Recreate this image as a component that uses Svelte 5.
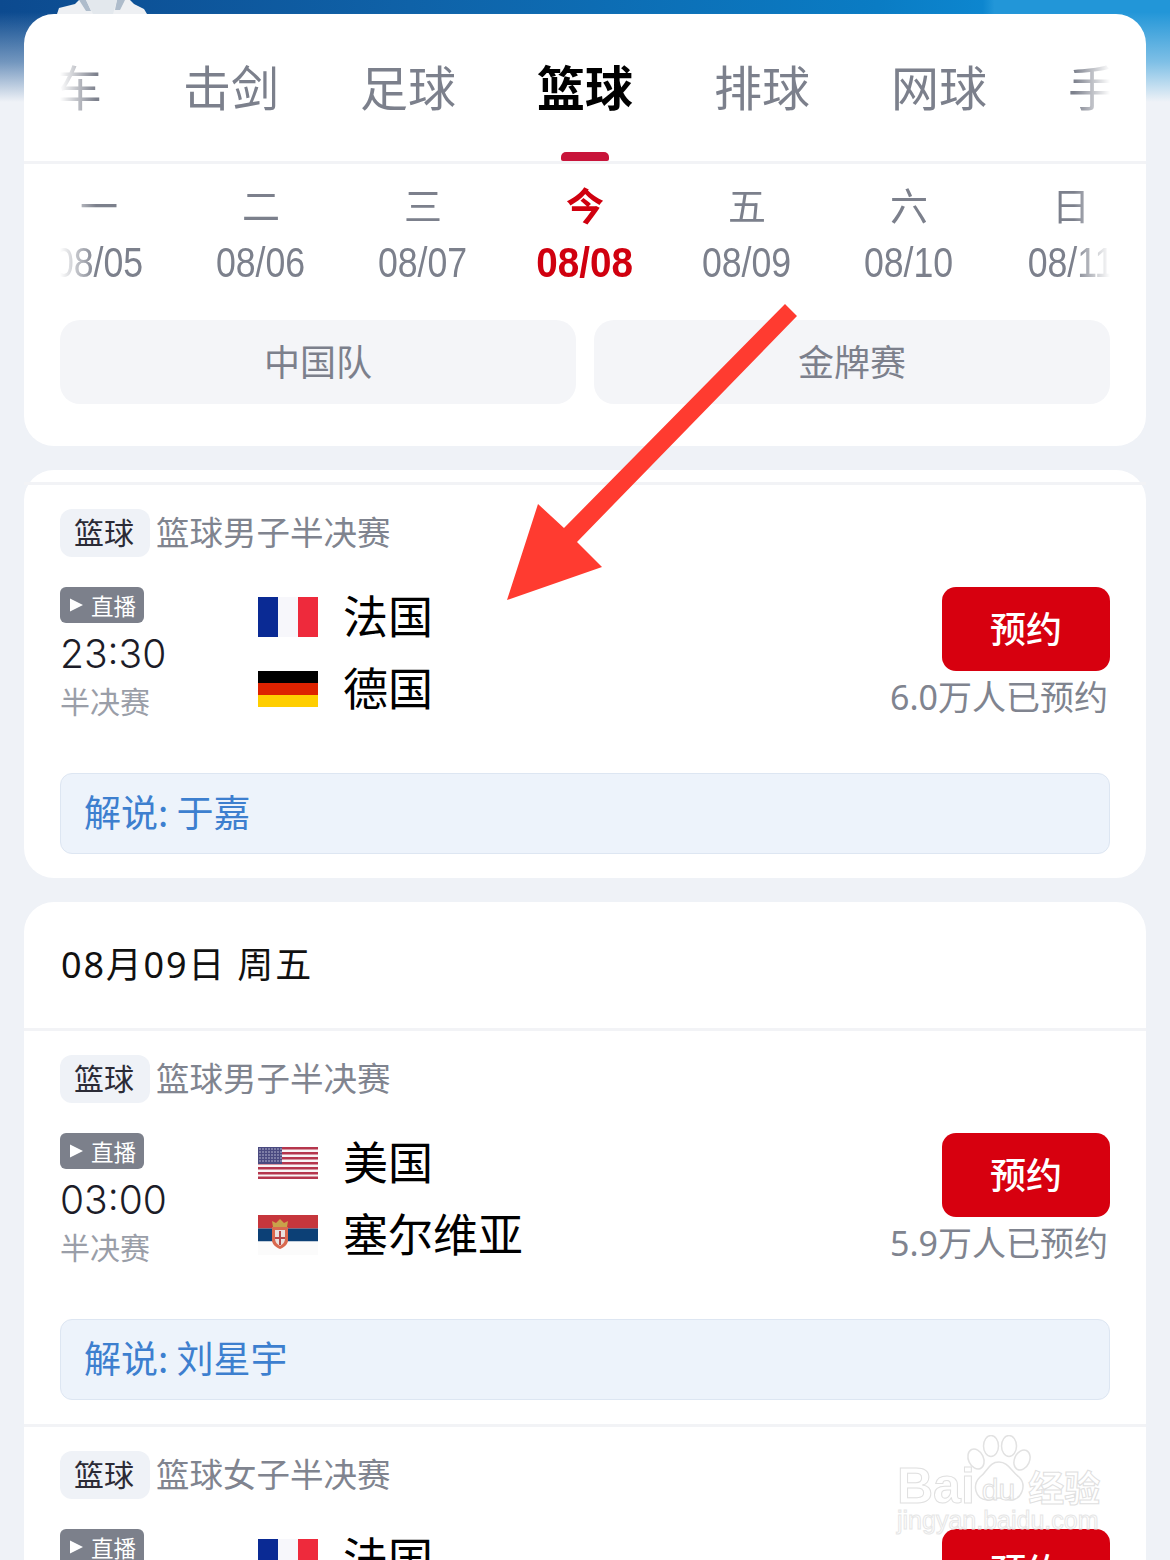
<script>
  const tabs = ['单车', '击剑', '足球', '篮球', '排球', '网球', '手球'];
  const days = [
    ['一', '08/05'], ['二', '08/06'], ['三', '08/07'], ['今', '08/08'],
    ['五', '08/09'], ['六', '08/10'], ['日', '08/11']
  ];
</script>

{#snippet flag(code)}
  {#if code === 'fr'}
    <svg class="flag" width="60" height="40" viewBox="0 0 60 40"><rect width="20" height="40" fill="#0a2a94"/><rect x="20" width="20" height="40" fill="#f7f7fb"/><rect x="40" width="20" height="40" fill="#ee2a3c"/></svg>
  {:else if code === 'de'}
    <svg class="flag" width="60" height="36" viewBox="0 0 60 36"><rect width="60" height="12" fill="#000"/><rect y="12" width="60" height="12" fill="#dd2200"/><rect y="24" width="60" height="12" fill="#ffce00"/></svg>
  {:else if code === 'us'}
    <svg class="flag" width="60" height="32" viewBox="0 0 60 32">
      <rect width="60" height="32" fill="#f8f4f5"/>
      {#each [0, 5, 10, 15, 20, 25, 29.5] as y}<rect y={y} width="60" height="2.5" fill="#b5364d"/>{/each}
      <rect width="24" height="17" fill="#4a4a80"/>
      {#each [2, 5, 8, 11, 14] as y}{#each [2, 5, 8, 11, 14, 17, 20, 23] as x}<rect x={x - 0.6} y={y - 0.6} width="1.2" height="1.2" fill="#d8d8e8"/>{/each}{/each}
    </svg>
  {:else}
    <svg class="flag" width="60" height="40" viewBox="0 0 60 40">
      <rect width="60" height="13.500" fill="#c6363c"/><rect y="13.500" width="60" height="13" fill="#0c4076"/><rect y="26.500" width="60" height="13.500" fill="#fbfbfb"/>
      <path d="M15 12 14 6l4 2 4-4 4 4 4-2-1 6z" fill="#c9a24a"/>
      <path d="M14 12h16v13c0 4-3 7-8 9-5-2-8-5-8-9z" fill="#d9694f"/>
      <path d="M17 15h10v9c0 3-2 5-5 7-3-2-5-4-5-7z" fill="#e9e2e0"/>
      <path d="M21 16h2v6h4v2h-4v6h-2v-6h-4v-2h4z" fill="#b5484a"/>
    </svg>
  {/if}
{/snippet}

{#snippet match(kind, title, time, teams, count, caster)}
  <section class="match">
    <div class="heading">
      <span class="tag">{kind}</span>
      <span class="title">{title}</span>
    </div>
    <div class="main">
      <div class="when">
        <span class="live">
          <svg width="13" height="14" viewBox="0 0 13 14"><path d="M0 .5v13l13-6.500z" fill="#fff"/></svg>
          直播
        </span>
        <span class="time">{time}</span>
        <span class="stage">半决赛</span>
      </div>
      <div class="teams">
        {#each teams as t}
          <div class="team">
            <span class="flagbox">{@render flag(t[0])}</span>
            <span class="name">{t[1]}</span>
          </div>
        {/each}
      </div>
      <div class="action">
        <button class="book">预约</button>
        <span class="count">{count}万人已预约</span>
      </div>
    </div>
    <div class="caster">解说: {caster}</div>
  </section>
{/snippet}

<div class="page">
  <svg class="person" width="90" height="14" viewBox="0 0 90 14">
    <path d="M0 14 2 8 18 4 22 0H73l4 4 10 5 3 5z" fill="#eef0f3"/>
    <path d="M22 0h7l5 11h-5zM60 0h8l-5 10h-5z" fill="#aebccb"/>
    <path d="M29 0h31l-4 14H36z" fill="#e3e8ed"/>
  </svg>

  <div class="card top">
    <nav class="tabs fade">
      {#each tabs as t, i}
        <div class="tab" class:on={i === 3}>{t}</div>
      {/each}
    </nav>
    <div class="indicator-row"><span class="indicator"></span></div>
    <div class="rule"></div>
    <div class="days fade">
      {#each days as d, i}
        <div class="day" class:on={i === 3}>
          <span class="wk">{d[0]}</span>
          <span class="dt">{d[1]}</span>
        </div>
      {/each}
    </div>
    <div class="filters">
      <div class="filter">中国队</div>
      <div class="filter">金牌赛</div>
    </div>
  </div>

  <div class="card list first">
    <div class="rule"></div>
    {@render match('篮球', '篮球男子半决赛', '23:30', [['fr', '法国'], ['de', '德国']], '6.0', '于嘉')}
  </div>

  <div class="card list">
    <div class="dayhead">08月09日 周五</div>
    <div class="rule"></div>
    {@render match('篮球', '篮球男子半决赛', '03:00', [['us', '美国'], ['rs', '塞尔维亚']], '5.9', '刘星宇')}
    <div class="rule"></div>
    {@render match('篮球', '篮球女子半决赛', '03:00', [['fr', '法国'], ['de', '德国']], '5.9', '于嘉')}
  </div>

  <svg class="arrow" width="1170" height="1560" viewBox="0 0 1170 1560">
    <path d="M785 304 797 316 577 542 602 567 507 600 538 504 564 528z" fill="#ff3b30"/>
  </svg>

  <div class="mark">
    <svg class="paw" width="66" height="68" viewBox="0 0 66 68">
      <g fill="#fff" fill-opacity=".7" stroke="#e2e2e2" stroke-width="1.500">
        <ellipse cx="10" cy="24" rx="7.500" ry="10.500" transform="rotate(-25 10 24)"/>
        <ellipse cx="25" cy="11" rx="7.500" ry="10.500"/>
        <ellipse cx="43" cy="11" rx="7.500" ry="10.500"/>
        <ellipse cx="56" cy="25" rx="7.500" ry="10.500" transform="rotate(25 56 25)"/>
        <path d="M33 27c9 0 12 9 20 15 8 8 3 23-9 23-5 0-7-2-11-2s-7 3-12 2C9 64 6 50 14 42c8-6 9-15 19-15z"/>
      </g>
    </svg>
    <div class="markline"><span>Bai</span><span class="du">du</span><span class="jy">经验</span></div>
    <div class="markurl">jingyan.baidu.com</div>
  </div>
</div>

<style>
  :global(body) { margin: 0; }
  .page {
    position: relative;
    height: 1560px;
    overflow: hidden;
    padding: 14px 24px 0;
    box-sizing: border-box;
    font-family: "Noto Sans CJK SC", "Noto Sans", sans-serif;
    background-color: #eff2f7;
    background-image:
      linear-gradient(to bottom, rgba(239,242,247,0) 0, rgba(239,242,247,0) 12px, rgba(239,242,247,.45) 62px, rgba(239,242,247,1) 102px),
      linear-gradient(to right, #0c4a8f 0, #0f62a8 35%, #0a7cc4 75%, #0d86cf 84%, #2296d8 85%, #2296d8 100%);
    background-size: 100% 104px, 100% 104px;
    background-repeat: no-repeat;
  }
  .person { position: absolute; left: 57px; top: 0; }
  .card {
    background: #fff;
    border-radius: 30px;
    margin-bottom: 24px;
  }
  .top { padding-bottom: 42px; }
  .tabs, .days {
    display: flex;
    justify-content: center;
    margin: 0 36px;
    overflow: hidden;
  }
  .fade {
    -webkit-mask-image: linear-gradient(to right, transparent 0, #000 36px, #000 1014px, transparent 1050px);
    mask-image: linear-gradient(to right, transparent 0, #000 36px, #000 1014px, transparent 1050px);
  }
  .tabs { height: 147px; }
  .tab {
    flex: none;
    width: 177px;
    text-align: center;
    font-size: 48px;
    line-height: 143px;
    color: #7c808c;
  }
  .tab.on { color: #000; font-weight: 700; }
  .indicator-row { height: 0; display: flex; justify-content: center; }
  .indicator {
    display: block;
    width: 48px;
    height: 9px;
    margin-top: -9px;
    background: #c8143a;
    border-radius: 5px 5px 2px 2px;
  }
  .rule { height: 3px; background: #f2f3f6; }
  .days { padding-top: 18px; }
  .day {
    flex: none;
    width: 162px;
    display: flex;
    flex-direction: column;
    align-items: center;
    color: #7c808c;
  }
  .wk { font-size: 38px; line-height: 44px; }
  .dt {
    display: block;
    font-family: "Liberation Sans", sans-serif;
    font-size: 42px;
    line-height: 56px;
    margin-top: 9px;
    transform: scaleX(.85);
  }
  .day.on { color: #d0000f; }
  .day.on .wk { font-weight: 700; }
  .day.on .dt { font-weight: 700; transform: scaleX(.92); }
  .filters {
    display: flex;
    gap: 18px;
    margin: 29px 36px 0;
  }
  .filter {
    flex: 1;
    height: 84px;
    line-height: 81px;
    text-align: center;
    background: #f4f5f8;
    border-radius: 20px;
    color: #7c808c;
    font-size: 36px;
  }
  .first { padding-top: 12px; }
  .list:last-of-type { margin-bottom: 0; }
  .dayhead {
    height: 126px;
    line-height: 126px;
    padding-left: 37px;
    font-family: "Noto Sans", "Noto Sans CJK SC", sans-serif;
    font-size: 36px;
    letter-spacing: 1.800px;
    color: #111;
  }
  .match { padding: 24px 36px 24px; }
  .heading { display: flex; align-items: center; gap: 6px; height: 48px; }
  .tag {
    width: 88px;
    padding-right: 2px;
    height: 48px;
    line-height: 45px;
    text-align: center;
    border-radius: 12px;
    background: #eff2f7;
    color: #2b2b36;
    font-size: 30px;
  }
  .title { font-size: 33.500px; line-height: 44px; color: #80848f; margin-bottom: 4px; }
  .main {
    display: flex;
    margin-top: 24px;
    height: 144px;
  }
  .when {
    width: 198px;
    padding-top: 6px;
    display: flex;
    flex-direction: column;
    align-items: flex-start;
  }
  .live {
    display: flex;
    align-items: center;
    gap: 8px;
    width: 84px;
    height: 36px;
    box-sizing: border-box;
    padding-left: 10px;
    border-radius: 6px;
    background: #7c808b;
    color: #fff;
    font-size: 22.500px;
    line-height: 34px;
  }
  .time {
    font-family: Inter, "Noto Sans", sans-serif;
    font-weight: 300;
    font-size: 39px;
    line-height: 48px;
    margin-top: 7px;
    color: #1c1c28;
  }
  .stage {
    font-size: 30px;
    line-height: 44px;
    color: #9a9ea8;
  }
  .teams { flex: 1; display: flex; flex-direction: column; }
  .team { height: 72px; display: flex; align-items: center; }
  .flagbox { width: 60px; display: flex; align-items: center; margin-right: 25px; }
  .flag { display: block; }
  .name { font-size: 45px; color: #000; line-height: 68px; margin-bottom: 4px; }
  .action {
    padding-top: 6px;
    display: flex;
    flex-direction: column;
    align-items: flex-end;
  }
  .book {
    width: 168px;
    height: 84px;
    border: 0;
    border-radius: 14px;
    background: #d7000f;
    color: #fff;
    font: 500 36px "Noto Sans CJK SC", sans-serif;
    padding: 0 0 4px;
  }
  .count {
    font-family: "Noto Sans", "Noto Sans CJK SC", sans-serif;
    font-size: 34px;
    line-height: 52px;
    color: #80848f;
    margin-right: 2px;
  }
  .caster {
    margin-top: 48px;
    height: 81px;
    line-height: 75px;
    box-sizing: border-box;
    padding-left: 23px;
    background: #edf3fb;
    border: 1px solid #dde6f2;
    border-radius: 12px;
    font-size: 37px;
    color: #3d7fcf;
  }
  .arrow { position: absolute; left: 0; top: 0; pointer-events: none; }
  .mark {
    position: absolute;
    left: 897px;
    top: 1434px;
    width: 210px;
    height: 104px;
    pointer-events: none;
  }
  .paw { position: absolute; left: 69px; top: 1px; }
  .markline {
    position: absolute;
    left: 0;
    top: 20px;
    display: flex;
    align-items: center;
    font-family: "Liberation Sans", sans-serif;
    font-size: 50px;
    line-height: 56px;
    font-weight: 700;
    color: #fff;
    -webkit-text-stroke: 1px #e0e0e0;
  }
  .du { font-size: 30px; margin: 8px 13px 0 7px; font-weight: 400; }
  .jy { font-family: "Noto Sans CJK SC", sans-serif; font-size: 36px; }
  .markurl {
    position: absolute;
    left: 0;
    top: 72px;
    font-family: "Liberation Sans", sans-serif;
    font-size: 25px;
    line-height: 28px;
    color: #fff;
    -webkit-text-stroke: 1px #e6e6e6;
  }
</style>
